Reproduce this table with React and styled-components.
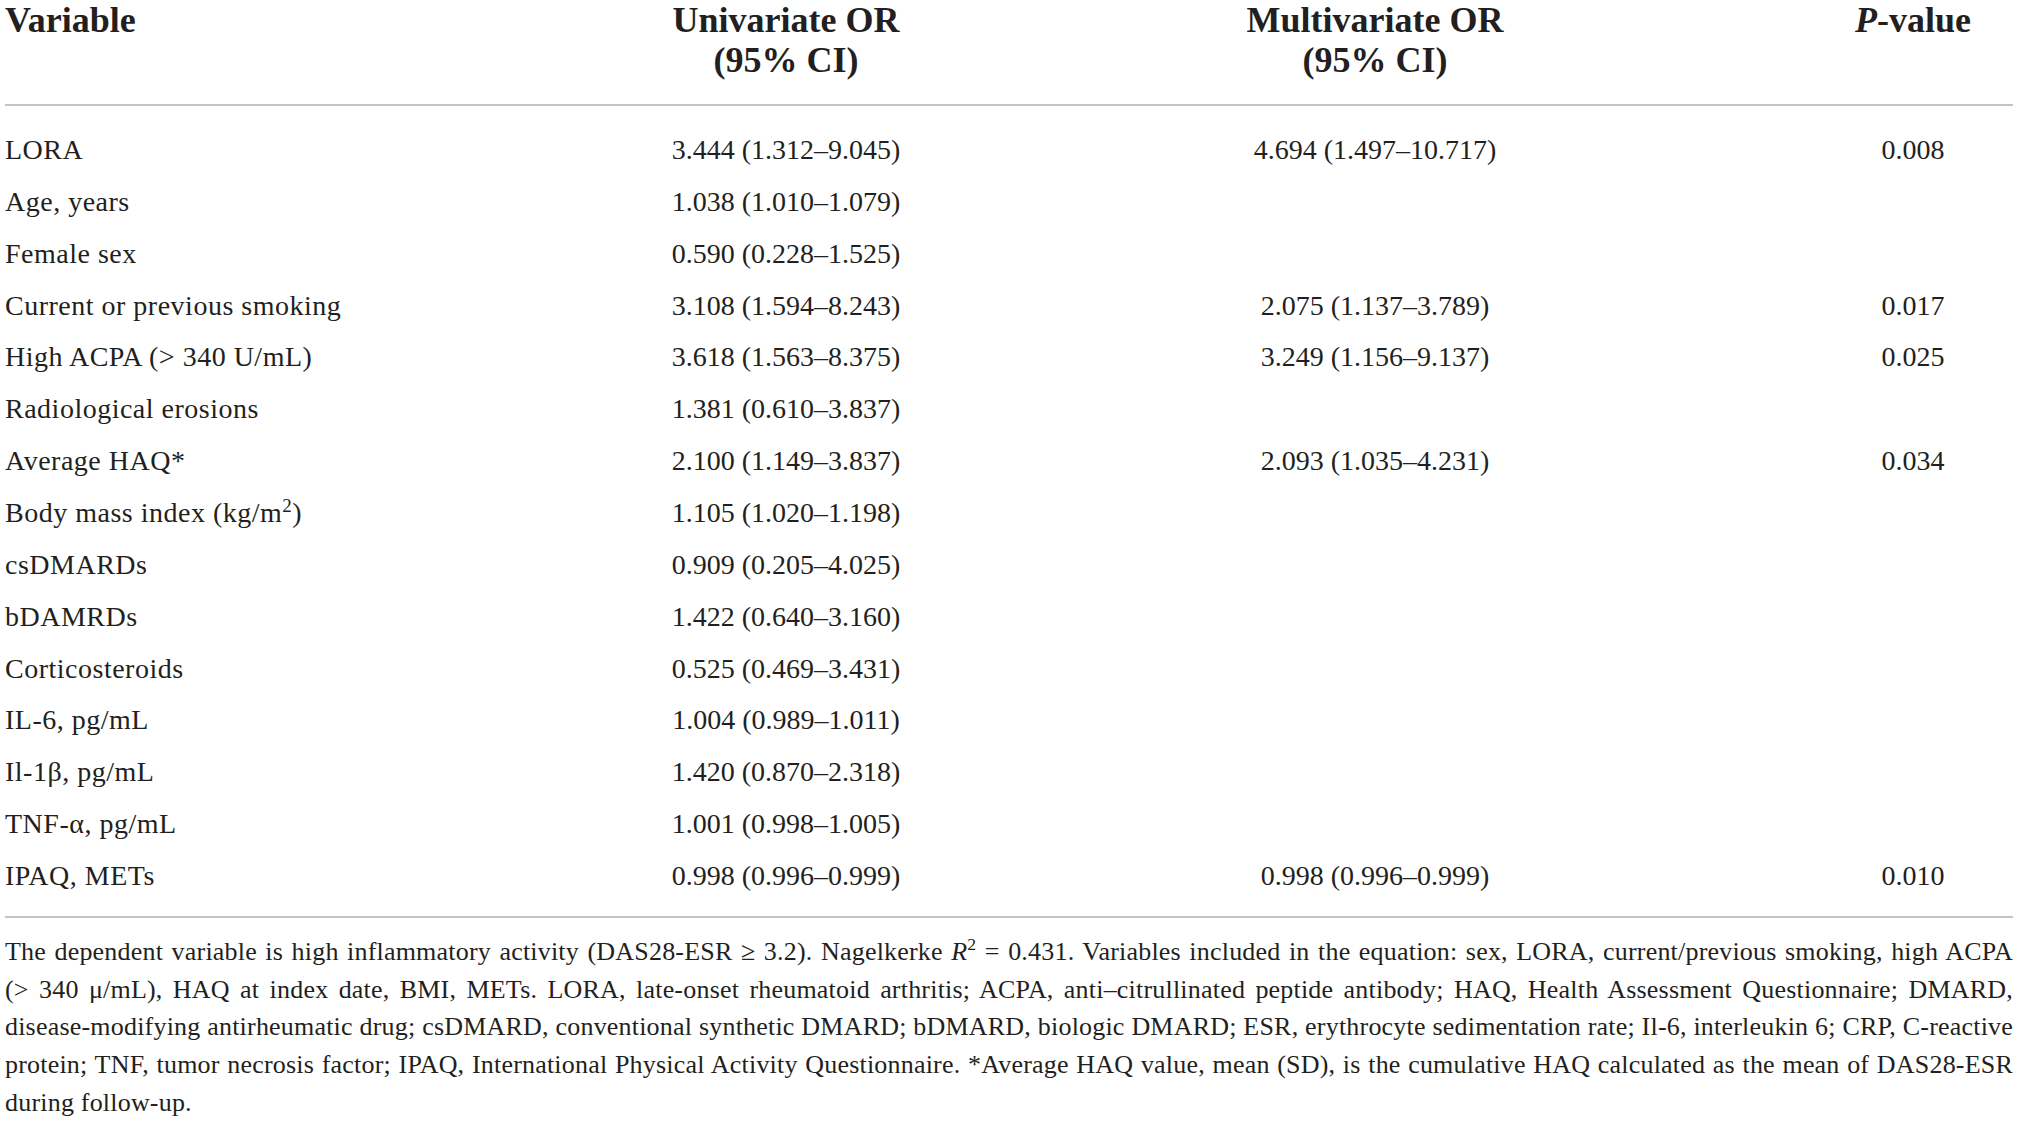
import React from 'react'
import styled, { createGlobalStyle } from 'styled-components'

const GlobalStyle = createGlobalStyle`
  html, body {
    margin: 0;
    padding: 0;
    background: #fff;
  }
  body {
    font-family: "Liberation Serif", "Times New Roman", serif;
    color: #231f20;
  }
`

const Page = styled.div`
  width: 2008px;
  padding: 0 6px 0 5px;
`

const Row = styled.div`
  display: grid;
  grid-template-columns: 630px 302px 876px 200px;
  align-items: start;
`

const HeadRow = styled(Row)`
  font-size: 36px;
  font-weight: 700;
  line-height: 40px;
`

const HeadCell = styled.div`
  text-align: ${p => (p.$left ? 'left' : 'center')};
  white-space: nowrap;
`

const Rule = styled.hr`
  border: 0;
  height: 2px;
  background: #c4c4c4;
  margin: ${p => p.$top}px 0 ${p => p.$bottom}px;
`

const Body = styled.div`
  font-size: 28px;
  line-height: 51.86px;
`

const Cell = styled.div`
  text-align: ${p => (p.$left ? 'left' : 'center')};
  letter-spacing: ${p => (p.$left ? '0.5px' : 'normal')};
  white-space: nowrap;
`

const Sup = styled.sup`
  font-size: 0.68em;
  line-height: 0;
  vertical-align: 0.55em;
`

const Footnote = styled.div`
  font-size: 26px;
  line-height: 37.7px;
  letter-spacing: 0.2px;
`

const NoteLine = styled.div`
  white-space: nowrap;
  text-align: ${p => (p.$last ? 'left' : 'justify')};
  text-align-last: ${p => (p.$last ? 'left' : 'justify')};
`

const rows = [
  ['LORA', '3.444 (1.312–9.045)', '4.694 (1.497–10.717)', '0.008'],
  ['Age, years', '1.038 (1.010–1.079)'],
  ['Female sex', '0.590 (0.228–1.525)'],
  ['Current or previous smoking', '3.108 (1.594–8.243)', '2.075 (1.137–3.789)', '0.017'],
  ['High ACPA (> 340 U/mL)', '3.618 (1.563–8.375)', '3.249 (1.156–9.137)', '0.025'],
  ['Radiological erosions', '1.381 (0.610–3.837)'],
  ['Average HAQ*', '2.100 (1.149–3.837)', '2.093 (1.035–4.231)', '0.034'],
  [<>Body mass index (kg/m<Sup>2</Sup>)</>, '1.105 (1.020–1.198)'],
  ['csDMARDs', '0.909 (0.205–4.025)'],
  ['bDAMRDs', '1.422 (0.640–3.160)'],
  ['Corticosteroids', '0.525 (0.469–3.431)'],
  ['IL-6, pg/mL', '1.004 (0.989–1.011)'],
  ['Il-1β, pg/mL', '1.420 (0.870–2.318)'],
  ['TNF-α, pg/mL', '1.001 (0.998–1.005)'],
  ['IPAQ, METs', '0.998 (0.996–0.999)', '0.998 (0.996–0.999)', '0.010']
]

const notes = [
  <>The dependent variable is high inflammatory activity (DAS28-ESR ≥ 3.2). Nagelkerke <i>R</i><Sup>2</Sup> = 0.431. Variables included in the equation: sex, LORA, current/previous smoking, high ACPA</>,
  '(> 340 μ/mL), HAQ at index date, BMI, METs. LORA, late-onset rheumatoid arthritis; ACPA, anti–citrullinated peptide antibody; HAQ, Health Assessment Questionnaire; DMARD,',
  'disease-modifying antirheumatic drug; csDMARD, conventional synthetic DMARD; bDMARD, biologic DMARD; ESR, erythrocyte sedimentation rate; Il-6, interleukin 6; CRP, C-reactive',
  'protein; TNF, tumor necrosis factor; IPAQ, International Physical Activity Questionnaire. *Average HAQ value, mean (SD), is the cumulative HAQ calculated as the mean of DAS28-ESR',
  'during follow-up.'
]

export default function App () {
  return (
    <Page>
      <GlobalStyle />
      <HeadRow>
        <HeadCell $left>Variable</HeadCell>
        <HeadCell>Univariate OR<br />(95% CI)</HeadCell>
        <HeadCell>Multivariate OR<br />(95% CI)</HeadCell>
        <HeadCell><i>P</i>-value</HeadCell>
      </HeadRow>
      <Rule $top={24} $bottom={18} />
      <Body>
        {rows.map((r, i) => (
          <Row key={i}>
            <Cell $left>{r[0]}</Cell>
            <Cell>{r[1]}</Cell>
            <Cell>{r[2] || ''}</Cell>
            <Cell>{r[3] || ''}</Cell>
          </Row>
        ))}
      </Body>
      <Rule $top={14} $bottom={15} />
      <Footnote>
        {notes.map((n, i) => (
          <NoteLine key={i} $last={i === notes.length - 1}>{n}</NoteLine>
        ))}
      </Footnote>
    </Page>
  )
}
